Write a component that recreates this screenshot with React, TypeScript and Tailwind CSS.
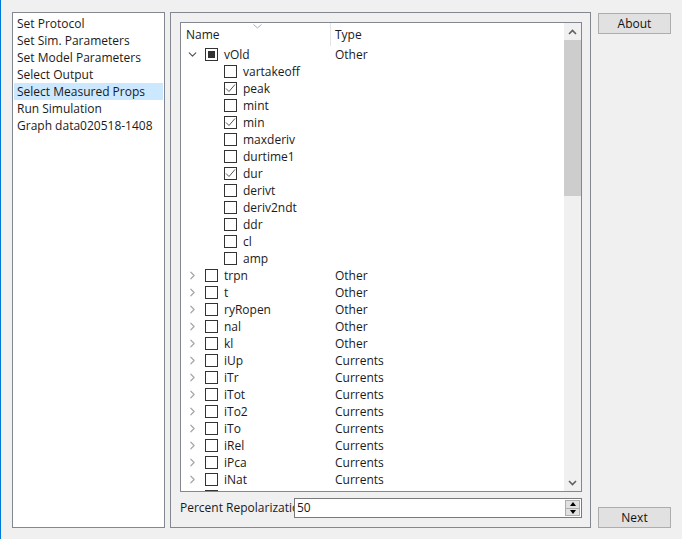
import { ChevronDown, ChevronRight } from "lucide-react";

const steps = [
  "Set Protocol",
  "Set Sim. Parameters",
  "Set Model Parameters",
  "Select Output",
  "Select Measured Props",
  "Run Simulation",
  "Graph data020518-1408",
];

const children = [
  ["vartakeoff", false],
  ["peak", true],
  ["mint", false],
  ["min", true],
  ["maxderiv", false],
  ["durtime1", false],
  ["dur", true],
  ["derivt", false],
  ["deriv2ndt", false],
  ["ddr", false],
  ["cl", false],
  ["amp", false],
] as const;

const groups = [
  ["trpn", "Other"],
  ["t", "Other"],
  ["ryRopen", "Other"],
  ["nal", "Other"],
  ["kl", "Other"],
  ["iUp", "Currents"],
  ["iTr", "Currents"],
  ["iTot", "Currents"],
  ["iTo2", "Currents"],
  ["iTo", "Currents"],
  ["iRel", "Currents"],
  ["iPca", "Currents"],
  ["iNat", "Currents"],
  ["iNal", "Currents"],
];

function Box({ state }: { state?: "checked" | "partial" }) {
  return (
    <span className="w-[13px] h-[13px] shrink-0 border border-[#333333] bg-white flex items-center justify-center">
      {state === "partial" && <span className="w-[7px] h-[7px] bg-[#333333]" />}
      {state === "checked" && (
        <svg width="11" height="11" viewBox="0 0 11 11" fill="none">
          <path d="M1 5.5 L4 8.5 L10 1.5" stroke="#555555" strokeWidth="1" />
        </svg>
      )}
    </span>
  );
}

function Button({ label }: { label: string }) {
  return (
    <button className="w-[73px] h-[21px] bg-[#e1e1e1] border border-[#adadad] text-[#111111] text-[12px] leading-none">
      {label}
    </button>
  );
}

export default function App() {
  return (
    <div
      className="w-[682px] h-[539px] bg-[#f0f0f0] border-l border-[#0078d7] flex gap-[5px] pl-[11px] pt-[12px] pb-[11px] overflow-hidden text-[12px] text-[#1a1a1a]"
      style={{ fontFamily: '"Open Sans", "Noto Sans", sans-serif' }}
    >
      {/* step list */}
      <div className="w-[153px] border border-[#828790] bg-white p-px pt-[2px] shrink-0">
        {steps.map((s, i) => (
          <div
            key={s}
            className={`h-[17px] leading-[17px] pl-[3px] whitespace-nowrap ${i === 4 ? "bg-[#cce8ff]" : ""}`}
          >
            {s}
          </div>
        ))}
      </div>

      <div className="w-[421px] shrink-0 border border-[#828790] pl-[9px] pr-[8px] pt-[9px] flex flex-col">
        {/* tree */}
        <div className="h-[470px] border border-[#828790] bg-white flex overflow-hidden shrink-0">
          <div className="flex-1 min-w-0 flex flex-col">
            <div className="relative h-[23px] flex shrink-0">
              <svg className="absolute left-[72px] top-[1px]" width="9" height="5" viewBox="0 0 9 5" fill="none">
                <path d="M0.5 0.5 L4.5 4 L8.5 0.5" stroke="#b0b0b0" />
              </svg>
              <div className="w-[150px] border-r border-[#e5e5e5] pl-[5px] pt-[2px] leading-[20px]">Name</div>
              <div className="pl-[4px] pt-[2px] leading-[20px]">Type</div>
            </div>
            <div className="h-[17px] flex items-center shrink-0">
              <span className="w-[24px] pl-[5px] shrink-0">
                <ChevronDown size={13} strokeWidth={2.2} color="#555555" />
              </span>
              <Box state="partial" />
              <span className="w-[113px] pl-[6px]">vOld</span>
              <span className="pl-[4px]">Other</span>
            </div>
            {children.map(([name, on]) => (
              <div key={name} className="h-[17px] flex items-center pl-[43px] shrink-0">
                <Box state={on ? "checked" : undefined} />
                <span className="pl-[6px]">{name}</span>
              </div>
            ))}
            {groups.map(([name, type]) => (
              <div key={name} className="h-[17px] flex items-center shrink-0">
                <span className="w-[24px] pl-[5px] shrink-0">
                  <ChevronRight size={13} strokeWidth={2.2} color="#a6a6a6" />
                </span>
                <Box />
                <span className="w-[113px] pl-[6px]">{name}</span>
                <span className="pl-[4px]">{type}</span>
              </div>
            ))}
          </div>
          <div className="w-[17px] bg-[#f0f0f0] shrink-0 flex flex-col">
            <div className="h-[17px] flex items-center justify-center shrink-0">
              <svg width="9" height="6" viewBox="0 0 9 6" fill="none">
                <path d="M1 5 L4.5 1.5 L8 5" stroke="#606060" strokeWidth="1.6" />
              </svg>
            </div>
            <div className="h-[156px] bg-[#cdcdcd] shrink-0" />
            <div className="flex-1" />
            <div className="h-[17px] flex items-center justify-center shrink-0">
              <svg width="9" height="6" viewBox="0 0 9 6" fill="none">
                <path d="M1 1 L4.5 4.5 L8 1" stroke="#606060" strokeWidth="1.6" />
              </svg>
            </div>
          </div>
        </div>

        {/* percent repolarization */}
        <div className="mt-[6px] flex items-center">
          <span className="w-[114px] pl-[-1px] whitespace-nowrap">Percent Repolarization</span>
          <div className="flex-1 h-[20px] border border-[#7a7a7a] bg-white flex items-center justify-between pl-[2px]">
            <span>50</span>
            <div className="w-[15px] h-[16px] mr-px border border-[#adadad] bg-[#e1e1e1] flex flex-col">
              <div className="flex-1 border-b border-[#adadad] flex items-center justify-center">
                <span className="border-x-[3.5px] border-x-transparent border-b-[4px] border-b-black" />
              </div>
              <div className="flex-1 flex items-center justify-center">
                <span className="border-x-[3.5px] border-x-transparent border-t-[4px] border-t-black" />
              </div>
            </div>
          </div>
        </div>
      </div>

      <div className="flex flex-col justify-between ml-[2px] pt-px shrink-0">
        <Button label="About" />
        <Button label="Next" />
      </div>
    </div>
  );
}
